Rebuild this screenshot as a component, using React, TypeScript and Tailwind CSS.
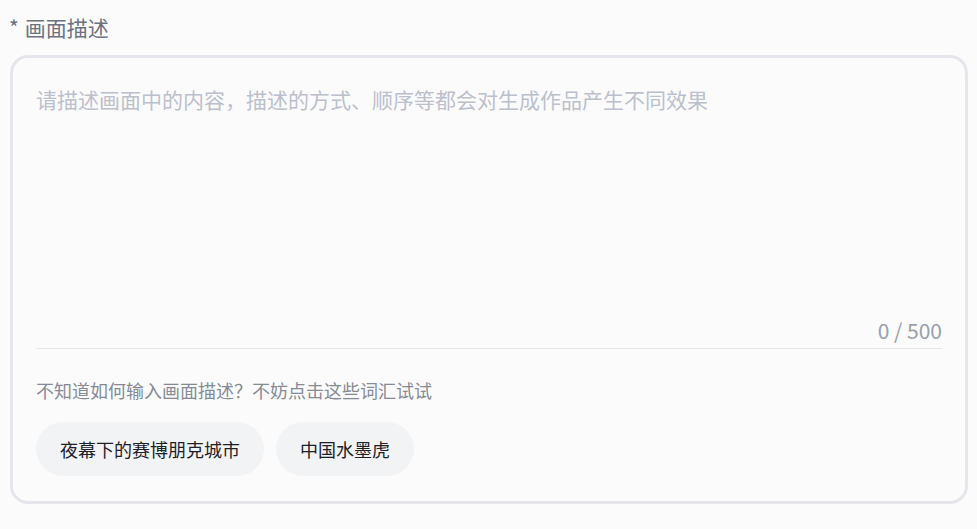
import React, { useState } from 'react';

const font = { fontFamily: '"Noto Sans CJK SC", "Noto Sans", sans-serif' };

const suggestions = ['夜幕下的赛博朋克城市', '中国水墨虎'];

export default function App() {
  const [text, setText] = useState('');

  return (
    <div
      style={font}
      className="w-full h-[529px] bg-[#fbfbfc] pl-[10px] pr-[9px] pt-[13px]"
    >
      {/* Label */}
      <div className="-ml-px flex text-[21px] leading-[28px] text-[#6b7280]">
        <span>*</span>
        <span className="ml-[6px]">画面描述</span>
      </div>

      {/* Input card */}
      <div className="mt-[14px] border-[3px] border-[#e5e6eb] rounded-[18px] px-[23px] pb-[25px]">
        <textarea
          value={text}
          onChange={(e) => setText(e.target.value.slice(0, 500))}
          placeholder="请描述画面中的内容，描述的方式、顺序等都会对生成作品产生不同效果"
          className="mt-[27px] block w-full h-[231px] resize-none bg-transparent outline-none text-[21px] leading-[28px] text-[#1d2129] placeholder:text-[#bcc0cc]"
        />
        <div className="text-right text-[21px] leading-[28px] text-[#9aa0a9]">
          {text.length} / 500
        </div>
        <div className="mt-[4px] h-px bg-[#e5e6eb]" />

        <div className="mt-[28px] text-[18px] leading-[26px] text-[#858b95]">
          不知道如何输入画面描述？不妨点击这些词汇试试
        </div>

        <div className="mt-[19px] flex gap-3">
          {suggestions.map((s) => (
            <button
              key={s}
              onClick={() => setText(s)}
              className="h-[54px] px-6 rounded-full bg-[#f2f3f5] text-[18px] text-[#1d2129]"
            >
              {s}
            </button>
          ))}
        </div>
      </div>
    </div>
  );
}
